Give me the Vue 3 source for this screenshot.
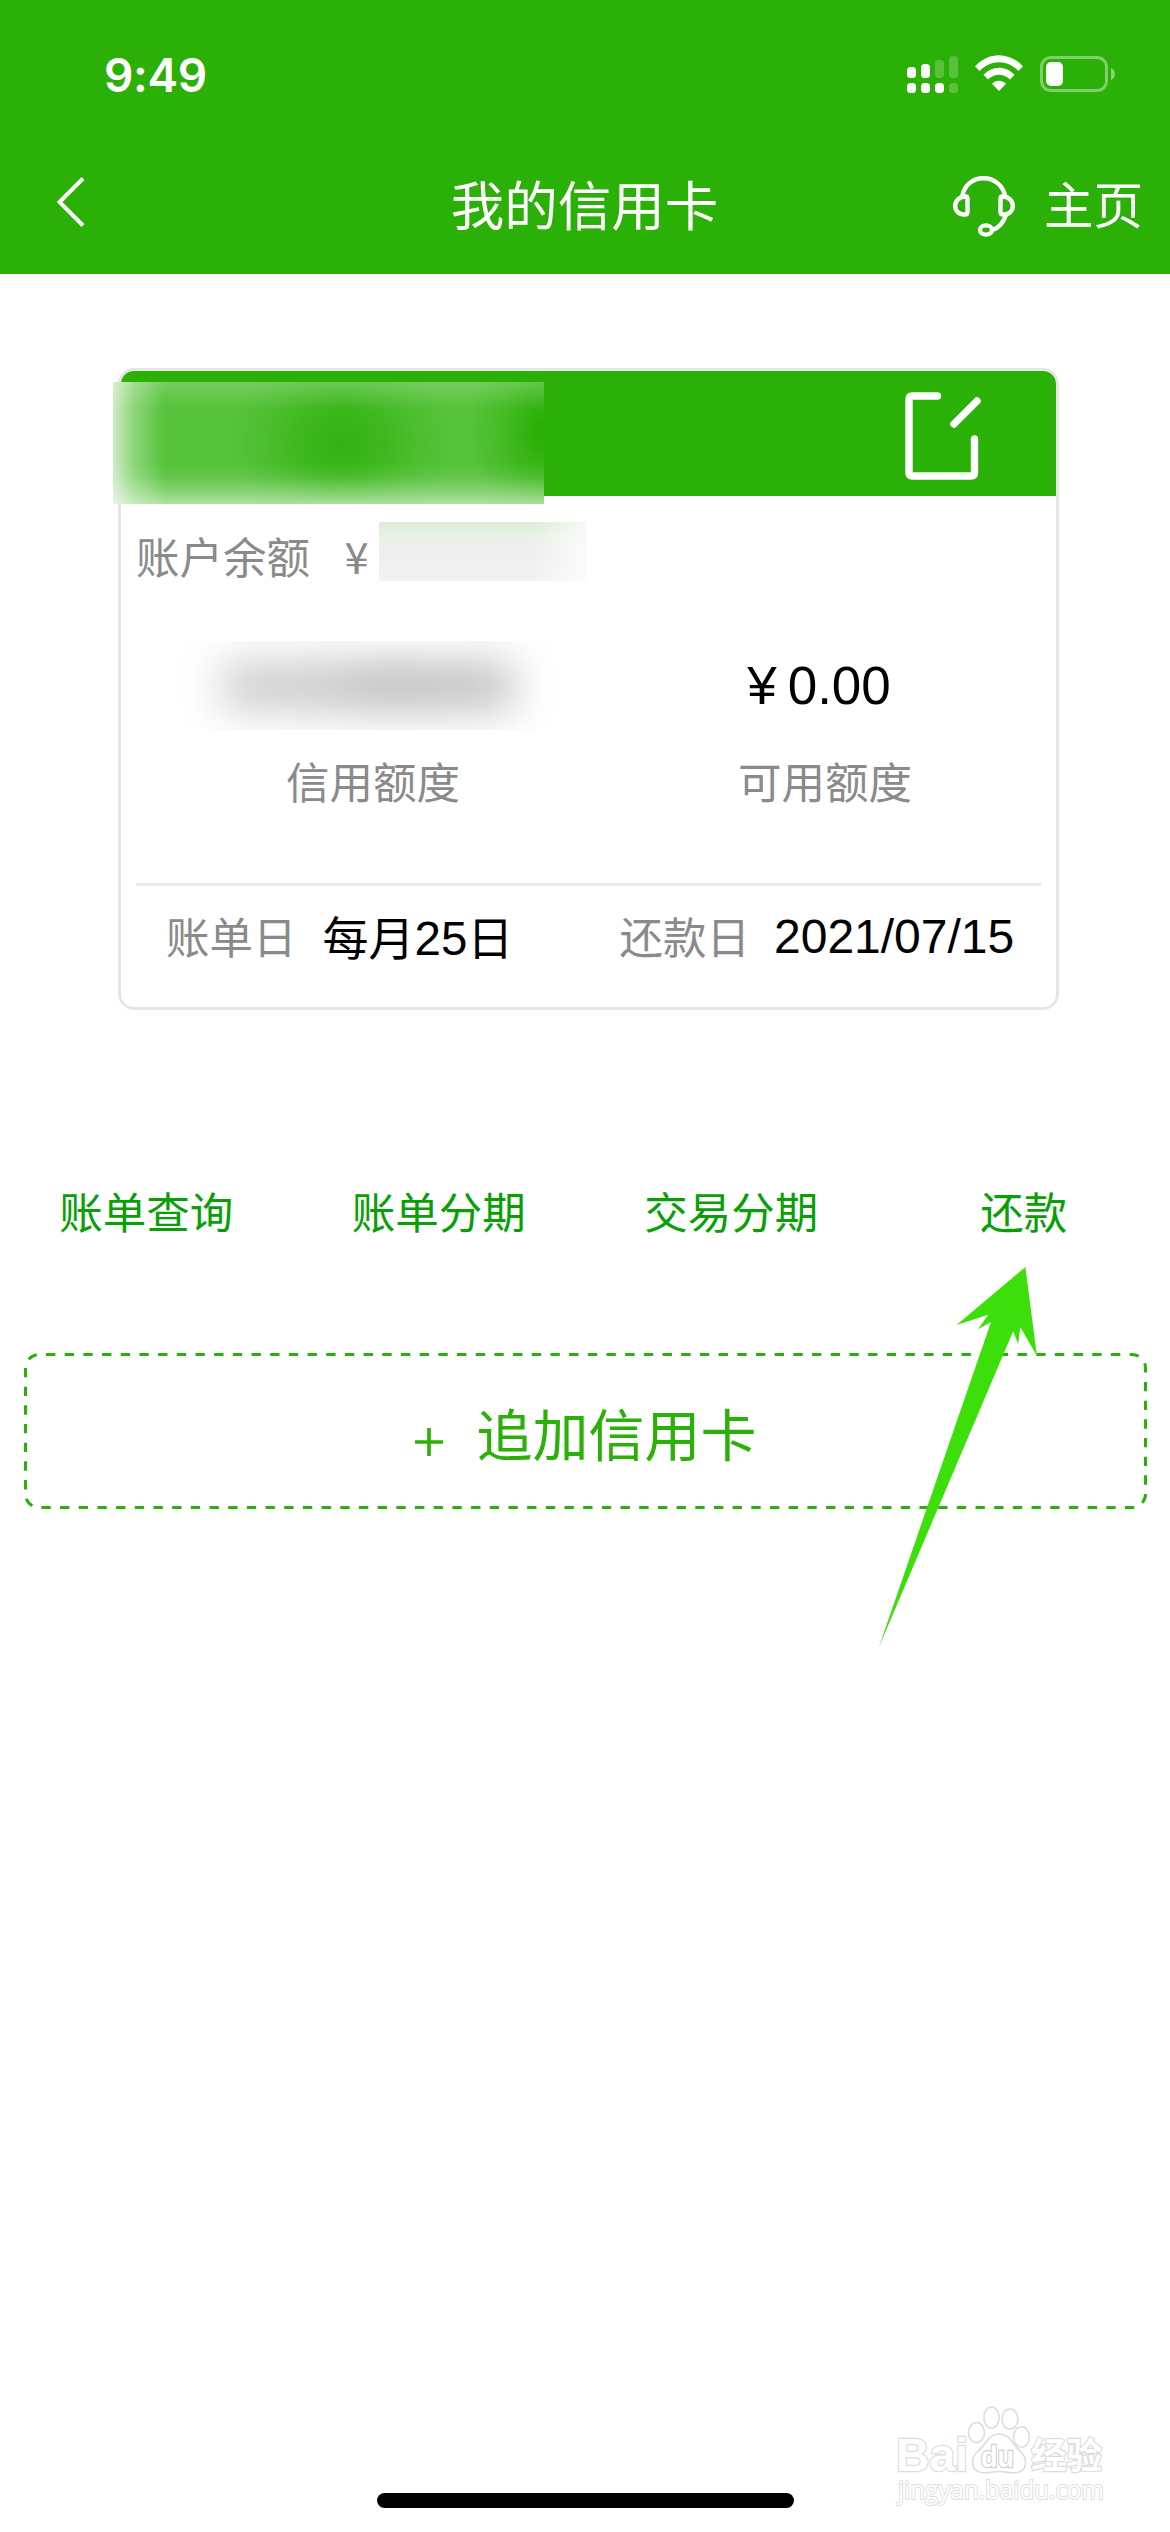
<script setup>
const bars = [
  { h: 11, on: true, dot: true },
  { h: 14, on: true, dot: true },
  { h: 18, on: false, dot: true },
  { h: 22, on: false, dot: false },
]
const actions = ['账单查询', '账单分期', '交易分期', '还款']
</script>

<template>
  <div class="screen">
    <header class="top">
      <div class="status">
        <span class="time">9:49</span>
        <div class="indicators">
          <div class="signal">
            <div v-for="(b, i) in bars" :key="i" class="bar-col">
              <i class="bar" :class="{ dim: !b.on }" :style="{ height: b.h + 'px' }"></i>
              <i class="dot" :class="{ dim: !b.dot }"></i>
            </div>
          </div>
          <svg class="wifi" width="48" height="37" viewBox="0 0 48 37" fill="#fff">
            <path d="M0 11.4C13.6-3.6 34.4-3.6 48 11.4L43.4 16C32.4 4.400 15.600 4.400 4.600 16Z" />
            <path d="M8.400 19.800C17.500 10.300 30.500 10.300 39.600 19.800L35 24.600C28.600 18.200 19.400 18.200 13 24.600Z" />
            <path d="M17 28.700C21 24.700 27 24.700 31 28.700L24 36Z" />
          </svg>
          <svg class="battery" width="76" height="36" viewBox="0 0 76 36">
            <rect x="1.500" y="1.500" width="65" height="33" rx="9.500" fill="none" stroke="#fff" stroke-opacity=".4" stroke-width="3" />
            <rect x="6" y="6" width="17" height="24" rx="5" fill="#fff" />
            <path d="M71 12C76.300 14 76.300 22 71 24Z" fill="#fff" fill-opacity=".45" />
          </svg>
        </div>
      </div>
      <nav class="nav">
        <svg class="back" width="30" height="52" viewBox="0 0 30 52" fill="none" stroke="#fff" stroke-width="4">
          <path d="M26 2.500L2.500 26L26 49.500" />
        </svg>
        <h1 class="title">我的信用卡</h1>
        <div class="nav-right">
          <svg width="62" height="62" viewBox="0 0 62 62" fill="none" stroke="#fff" stroke-width="4.400">
            <path d="M9 21C11 9 20 2.300 30.500 2.300S50 9 52.500 21" />
            <path d="M13 20.500C6 20.500 2.200 25 2.200 30S6 38.500 11 38.500H12Q14.500 38.500 14.500 36V23Q14.500 20.500 13 20.500Z" />
            <path d="M49 20.500C56 20.500 59.800 25 59.800 30S56 38.500 51 38.500H50Q47.500 38.500 47.500 36V23Q47.500 20.500 49 20.500Z" />
            <path d="M53 39C50.500 46 46 52 39.500 54" />
            <ellipse cx="33" cy="54" rx="6" ry="4.600" />
          </svg>
          <span class="home-link">主页</span>
        </div>
      </nav>
    </header>

    <main>
      <section class="card">
        <div class="card-head">
          <div class="mask-name"></div>
          <svg class="edit" width="78" height="90" viewBox="0 0 78 90" fill="none" stroke="#fff" stroke-width="7.400" stroke-linecap="round" stroke-linejoin="round">
            <path d="M33.500 5H8.500Q5 5 5 8.500V81.500Q5 85 8.500 85H67Q70.500 85 70.500 81.500V48" />
            <path d="M50 33L73 10" />
          </svg>
        </div>
        <div class="balance">
          <span class="balance-label">账户余额</span>
          <span class="yen">¥</span>
          <div class="mask-balance"></div>
        </div>
        <div class="limits">
          <div class="limit">
            <div class="amount"><div class="mask-limit"><i></i></div></div>
            <div class="label">信用额度</div>
          </div>
          <div class="limit">
            <div class="amount"><span class="value">¥<b>0.00</b></span></div>
            <div class="label">可用额度</div>
          </div>
        </div>
        <div class="dates">
          <div class="date"><span>账单日</span><span class="day monthly">每月<b>25</b>日</span></div>
          <div class="date due"><span>还款日</span><span class="day">2021/07/15</span></div>
        </div>
      </section>

      <div class="actions">
        <div v-for="a in actions" :key="a" class="action">{{ a }}</div>
      </div>

      <div class="add">
        <svg class="dashes" width="1123" height="156" viewBox="0 0 1123 156">
          <rect x="1.500" y="1.500" width="1120" height="153" rx="13.500" fill="none" stroke="#2bb007" stroke-width="3" pathLength="270" stroke-dasharray="1 1" stroke-dashoffset="-.75" />
        </svg>
        <svg class="plus" width="28" height="28" viewBox="0 0 28 28" stroke="#2bb007" stroke-width="3.600">
          <path d="M0 14H28M14 0V28" />
        </svg>
        <span class="add-text">追加信用卡</span>
      </div>
    </main>

    <svg class="pointer" width="160" height="382" viewBox="0 0 160 382">
      <path d="M147.400 0L78.500 58L110.300 47.700L100 62.300L113 55L.8 380.500L135.200 64.300L140.100 77L142.400 60.300L158.900 88.700Z" fill="#3ddf0a" />
    </svg>

    <div class="watermark">
      <svg width="220" height="120" viewBox="0 0 220 120">
        <g fill="#fff" stroke="#dcdcdc" stroke-width="1.600">
          <ellipse cx="86.500" cy="32.500" rx="8" ry="10" />
          <ellipse cx="101.500" cy="17.500" rx="7.600" ry="10.500" />
          <ellipse cx="120" cy="19" rx="8" ry="10" />
          <ellipse cx="131.500" cy="37" rx="8" ry="10.200" />
          <path d="M109 34C98 34 97 44 88 51C80 58 81 71 91 72.500C98 73.500 101 71.500 109 71.500S121 74 127 72.500C137 71 138 59 131 52C122 44 120 34 109 34Z" />
        </g>
        <text x="6" y="71" class="bai" textLength="72" lengthAdjust="spacingAndGlyphs">Bai</text>
        <text x="91" y="67" class="du" textLength="33" lengthAdjust="spacingAndGlyphs">du</text>
        <text x="141" y="69" class="jy" textLength="71" lengthAdjust="spacingAndGlyphs">经验</text>
        <text x="8" y="99" class="url" textLength="206" lengthAdjust="spacingAndGlyphs">jingyan.baidu.com</text>
      </svg>
    </div>

    <div class="home-bar"></div>
  </div>
</template>

<style>
body {
  margin: 0;
  background: #fff;
}
</style>

<style scoped>
.screen {
  position: relative;
  box-sizing: border-box;
  width: 1170px;
  height: 2532px;
  overflow: hidden;
  background: #fff;
  font-family: "Noto Sans CJK SC", "Liberation Sans", sans-serif;
  font-weight: 400;
}
svg {
  display: block;
  flex: none;
}
.top {
  height: 274px;
  background: #2bb007;
  color: #fff;
}
.status {
  display: flex;
  justify-content: space-between;
  height: 130px;
  padding: 0 54px 0 104px;
}
.time {
  margin-top: 45px;
  font: 600 46px/60px Inter, sans-serif;
  letter-spacing: -0.3px;
}
.indicators {
  display: flex;
  align-items: flex-start;
  padding-top: 55px;
}
.signal {
  display: flex;
  align-items: flex-end;
  gap: 5px;
  height: 38px;
  margin-right: 17px;
}
.bar-col {
  display: flex;
  flex-direction: column;
  gap: 5px;
  width: 9px;
}
.bar,
.dot {
  display: block;
  border-radius: 3.500px;
  background: #fff;
}
.dot {
  height: 10px;
}
.dim {
  opacity: 0.22;
}
.battery {
  margin: 1px 0 0 17px;
}
.nav {
  display: grid;
  grid-template-columns: 1fr auto 1fr;
  align-items: start;
  height: 144px;
  padding: 0 27px 0 57px;
}
.back {
  margin-top: 46px;
}
.title {
  margin: 33px 0 0 -31px;
  font-size: 53.500px;
  font-weight: 400;
  line-height: 80px;
}
.nav-right {
  display: flex;
  justify-content: flex-end;
  gap: 29px;
  padding-top: 46px;
}
.home-link {
  margin-top: -10px;
  font-size: 49.500px;
  line-height: 74px;
}
.card {
  box-sizing: border-box;
  width: 941px;
  height: 642px;
  margin: 94px 0 0 118px;
  border: 3px solid #e6e6e6;
  border-radius: 16px;
  color: #8a8a8a;
  font-size: 43.500px;
}
.card-head {
  position: relative;
  display: flex;
  justify-content: flex-end;
  height: 124.500px;
  padding: 20px 74px 0 0;
  box-sizing: border-box;
  border-radius: 13px 13px 0 0;
  background: #2bb007;
}
.mask-name {
  position: absolute;
  left: -8px;
  top: 11px;
  width: 431px;
  height: 122px;
  background:
    linear-gradient(to right, rgba(255, 255, 255, 0.7), rgba(255, 255, 255, 0.32) 5%, rgba(255, 255, 255, 0) 12%),
    linear-gradient(to top, rgba(255, 255, 255, 0.52), rgba(255, 255, 255, 0.3) 10%, rgba(255, 255, 255, 0.08) 22%, rgba(255, 255, 255, 0) 34%),
    linear-gradient(to bottom, rgba(255, 255, 255, 0.18), rgba(255, 255, 255, 0) 22%),
    radial-gradient(ellipse 110px 95px at 53% 50%, #33b312, rgba(51, 179, 18, 0.75) 35%, rgba(51, 179, 18, 0.25) 70%, rgba(51, 179, 18, 0)),
    radial-gradient(ellipse 75px 100px at 100% 42%, #2bb007 10%, rgba(43, 176, 7, 0.3) 65%, rgba(43, 176, 7, 0)),
    #56c23a;
}
.balance {
  display: flex;
  align-items: center;
  height: 120px;
  box-sizing: border-box;
  padding: 0 0 6px 15px;
}
.balance-label,
.yen {
  padding-top: 5px;
}
.yen {
  margin-left: 28px;
  width: 40px;
  padding-right: 3px;
  box-sizing: border-box;
  text-align: center;
}
.mask-balance {
  width: 208px;
  height: 59px;
  margin: 0 0 3px 1px;
  background:
    linear-gradient(to right, rgba(255, 255, 255, 0) 72%, rgba(255, 255, 255, 0.75)),
    linear-gradient(to bottom, #d9eed5, #e9f0e6 25%, #efefef 60%, #f2f2f2);
}
.limits {
  display: flex;
  height: 267.500px;
  padding: 12px 0 0 26px;
  box-sizing: border-box;
}
.limit {
  width: 452px;
  text-align: center;
}
.amount {
  display: flex;
  justify-content: center;
  height: 116px;
  padding-top: 13px;
  box-sizing: border-box;
}
.mask-limit {
  width: 386px;
  height: 89px;
  margin-left: -10px;
  overflow: hidden;
}
.mask-limit i {
  display: block;
  width: 292px;
  height: 50px;
  margin: 20px 0 0 47px;
  background: linear-gradient(to right, #d0d0d0, #cacaca 35%, #bdbdbd 55%, #c6c6c6);
  filter: blur(21px);
}
.value {
  margin-left: -12px;
  color: #000;
  font: 400 53px/90px "Liberation Sans", sans-serif;
}
.value b {
  margin-left: 11px;
  font-weight: 400;
}
.limit .label {
  padding-top: 6px;
  line-height: 61px;
}
.dates {
  display: flex;
  margin: 0 15px;
  padding-left: 30px;
  border-top: 3px solid #ececec;
}
.date {
  display: flex;
  align-items: center;
  width: 453.500px;
  height: 98px;
}
.due {
  width: auto;
}
.day {
  margin-left: 24px;
  padding-top: 2px;
  color: #000;
  font-family: "Liberation Sans", sans-serif;
  font-size: 48px;
}
.monthly {
  margin-left: 26px;
  padding-top: 0;
  font-family: "Noto Sans CJK SC", sans-serif;
  font-size: 46px;
  line-height: 64px;
}
.monthly b {
  font: 400 47.500px/1 "Liberation Sans", sans-serif;
}
.actions {
  display: flex;
  margin-top: 165px;
}
.action {
  flex: 1;
  color: #08a006;
  font-size: 43.500px;
  line-height: 72px;
  text-align: center;
}
.add {
  position: relative;
  display: flex;
  align-items: center;
  justify-content: center;
  width: 1123px;
  height: 156px;
  margin: 106px 0 0 24px;
  color: #2bb007;
  font-size: 56px;
  line-height: 80px;
}
.add-text {
  padding-top: 2px;
}
.dashes {
  position: absolute;
  inset: 0;
}
.plus {
  margin: 22px 34px 0 0;
}
.pointer {
  position: absolute;
  left: 878px;
  top: 1267px;
}
.watermark {
  position: absolute;
  left: 890px;
  top: 2400px;
}
.watermark text {
  fill: #fff;
  stroke: #dcdcdc;
  stroke-width: 2.400px;
  paint-order: stroke;
}
.bai {
  font: 700 47px "Liberation Sans", sans-serif;
}
.watermark .du {
  stroke: #d0d0d0;
  font: 700 29px "Liberation Sans", sans-serif;
}
.jy {
  font: 700 36px "Noto Sans CJK SC", sans-serif;
}
.watermark .url {
  font: 400 26px "Open Sans", sans-serif;
  stroke: #dedede;
  stroke-width: 2px;
}
.home-bar {
  position: absolute;
  left: 377px;
  top: 2493px;
  width: 417px;
  height: 15px;
  border-radius: 8px;
  background: #000;
}
</style>
